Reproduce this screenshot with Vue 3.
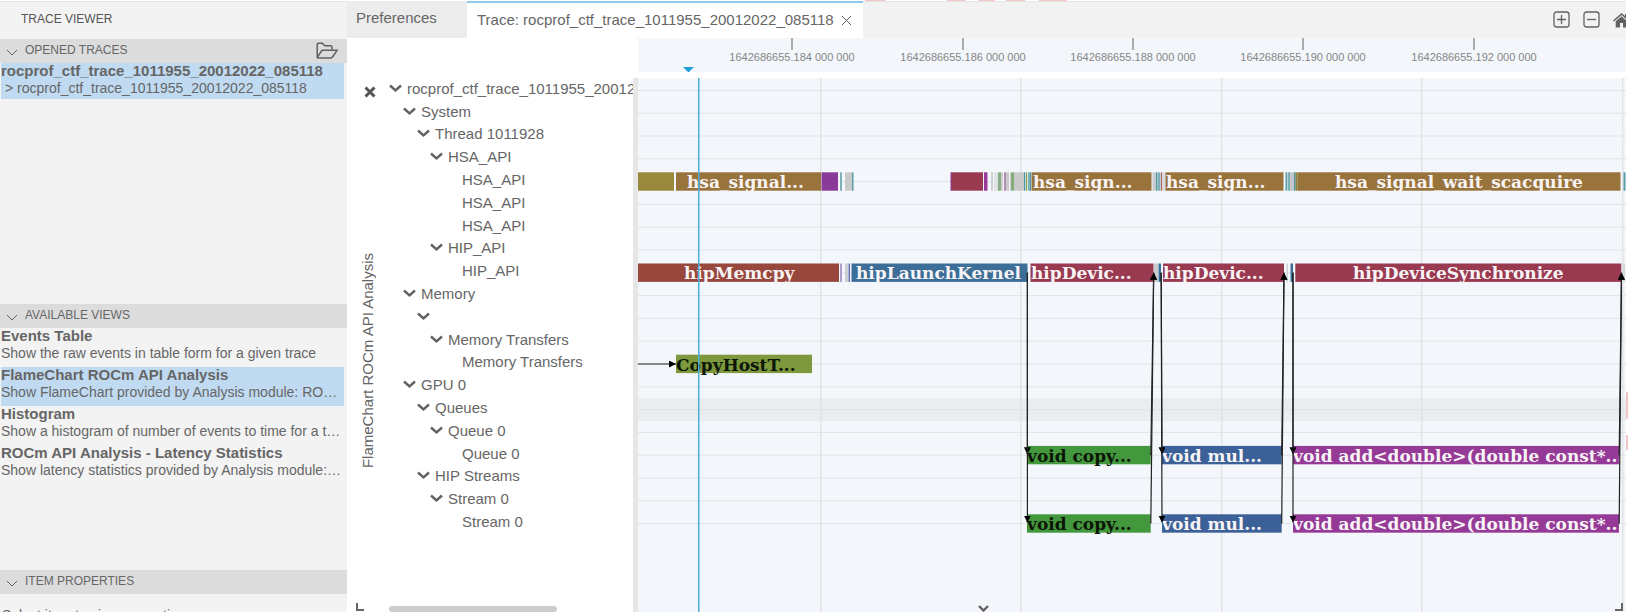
<script setup>
import { ref } from 'vue'

const traceName = 'rocprof_ctf_trace_1011955_20012022_085118'
const selectedView = ref(1)
const views = [
  { title: 'Events Table', desc: 'Show the raw events in table form for a given trace' },
  { title: 'FlameChart ROCm API Analysis', desc: 'Show FlameChart provided by Analysis module: ROCm API Analysis' },
  { title: 'Histogram', desc: 'Show a histogram of number of events to time for a trace' },
  { title: 'ROCm API Analysis - Latency Statistics', desc: 'Show latency statistics provided by Analysis module: ROCm API' }
]

const tree = [
  [0, traceName], [1, 'System'], [2, 'Thread 1011928'], [3, 'HSA_API'],
  [4, 'HSA_API'], [4, 'HSA_API'], [4, 'HSA_API'], [3, 'HIP_API'], [4, 'HIP_API'],
  [1, 'Memory'], [2, ''], [3, 'Memory Transfers'], [4, 'Memory Transfers'],
  [1, 'GPU 0'], [2, 'Queues'], [3, 'Queue 0'], [4, 'Queue 0'],
  [2, 'HIP Streams'], [3, 'Stream 0'], [4, 'Stream 0']
].map(([level, label]) => ({ level, label, open: level < 4 }))

const ticks = [154, 325, 495, 665, 836].map((x, i) => ({ x, label: `1642686655.${184 + i * 2} 000 000` }))

const rowPitch = 22.8
const rowY = (i) => 12.4 + i * rowPitch
const gridX = [182, 382, 583, 783, 984]

// [row, x, width, colour]
const bars = [
  [4, 0, 36, '#98893d'], [4, 38, 145, '#98733c'], [4, 183.5, 16.5, '#8a3a98'],
  [4, 202, 2, '#7fb0b8'], [4, 207, 7, '#c9cbcb'], [4, 214, 1.5, '#5a9ea8'],
  [4, 312.5, 2, '#8a3a98'], [4, 313.5, 31.5, '#993a50'], [4, 346, 3.5, '#9a3a9c'],
  [4, 353, 2, '#cfd0d0'], [4, 356, 4, '#e0e3e5'], [4, 360, 3, '#86ad86'], [4, 363, 2, '#cfcfcf'],
  [4, 366, 2, '#b48ab8'], [4, 368, 3, '#c9c9c9'], [4, 372, 1, '#cfcfcf'], [4, 373, 3, '#86ad7c'],
  [4, 376, 10, '#c9c9c9'], [4, 386, 1.3, '#4b96a5'], [4, 388, 1.2, '#86a04e'],
  [4, 390, 1.5, '#7fb0b8'], [4, 391.5, 1.5, '#4b96a5'], [4, 393.5, 120, '#98733c'],
  [4, 514.5, 3.5, '#c9cccc'], [4, 518, 1.5, '#4b96a5'], [4, 520, 2.5, '#7fb0b8'],
  [4, 523, 1.2, '#b06058'], [4, 525, 2.5, '#d9dadb'], [4, 527.5, 118, '#98733c'],
  [4, 647.5, 1.5, '#5a9ea8'], [4, 649.5, 2.5, '#7fb0b8'], [4, 652, 4, '#c4c8ca'],
  [4, 656, 1.5, '#4b96a5'], [4, 657.5, 2, '#8a7f3c'], [4, 659.5, 323, '#98733c'], [4, 985.5, 2, '#5a9ea8'],
  [8, 0, 201, '#98473d'], [8, 202, 2, '#ada0cf'], [8, 207, 3, '#cdcfd2'], [8, 210.5, 1.5, '#6a6fae'],
  [8, 213.5, 176, '#3c6e98'], [8, 392.5, 123, '#993a50'], [8, 516, 4, '#cbcccd'], [8, 520.5, 2.5, '#3c6e98'],
  [8, 525, 121, '#993a50'], [8, 648.5, 1.5, '#cfd1d4'], [8, 652.5, 2.5, '#3c6e98'],
  [8, 657.3, 326, '#993a50'], [8, 985, 2, '#d5d8db'],
  [12, 38, 136, '#7d983d'],
  [16, 389, 123.7, '#43983d'], [16, 524, 119.7, '#3c6098'], [16, 655, 326, '#963a98'],
  [19, 389, 123.7, '#43983d'], [19, 524, 119.7, '#3c6098'], [19, 655, 326, '#963a98']
]

// [row, x, text, dark]
const labels = [
  [4, 49, 'hsa_signal...'], [4, 395, 'hsa_sign...'], [4, 528, 'hsa_sign...'], [4, 697, 'hsa_signal_wait_scacquire'],
  [8, 46, 'hipMemcpy'], [8, 218, 'hipLaunchKernel'], [8, 393, 'hipDevic...'], [8, 525, 'hipDevic...'],
  [8, 715, 'hipDeviceSynchronize'],
  [12, 38, 'CopyHostT...', true],
  [16, 389, 'void copy...', true], [16, 524, 'void mul...'], [16, 655, 'void add<double>(double const*...'],
  [19, 389, 'void copy...', true], [19, 524, 'void mul...'], [19, 655, 'void add<double>(double const*...']
]

const arrows = []
for (const [top, bottom] of [[389.4, 389.4], [523.2, 524], [655, 655]]) {
  arrows.push([top, rowY(8), bottom, rowY(16) - 1], [top, rowY(8), bottom, rowY(19) - 1])
}
for (const [top, bottom] of [[515.7, 512.8], [646, 643.7], [983.5, 981.2]]) {
  arrows.push([bottom, rowY(16), top, rowY(8)], [bottom, rowY(19), top, rowY(8)])
}
arrows.push([0, rowY(12), 38, rowY(12)])
</script>

<template>
  <div class="page">
    <aside class="sidebar">
      <h1 class="side-title">TRACE VIEWER</h1>
      <section class="panel">
        <header class="panel-head">
          <svg class="thin-chev" width="12" height="7" viewBox="0 0 12 7"><path d="M1 1l5 5 5-5" /></svg>
          <h2>OPENED TRACES</h2>
          <button class="icon-btn folder" aria-label="Open trace">
            <svg width="22" height="18" viewBox="0 0 22 18">
              <path d="M1.2 15.500V2.600Q1.200 1.200 2.600 1.200H6.200L9 3.800H14.500Q16 3.800 16 5.200V8.200M1.200 15.500L6 8.300H21L16.500 15Q15.800 16 14.500 16H2Q1.200 16 1.200 15.500Z" />
            </svg>
          </button>
        </header>
        <ul class="items">
          <li>
            <button class="item trace selected">
              <strong>{{ traceName }}</strong>
              <span class="child">&gt; {{ traceName }}</span>
            </button>
          </li>
        </ul>
      </section>
      <section class="panel">
        <header class="panel-head">
          <svg class="thin-chev" width="12" height="7" viewBox="0 0 12 7"><path d="M1 1l5 5 5-5" /></svg>
          <h2>AVAILABLE VIEWS</h2>
        </header>
        <ul class="items">
          <li v-for="(v, i) in views" :key="v.title">
            <button class="item" :class="{ selected: i === selectedView }" @click="selectedView = i">
              <strong>{{ v.title }}</strong>
              <span>{{ v.desc }}</span>
            </button>
          </li>
        </ul>
      </section>
      <section class="panel">
        <header class="panel-head">
          <svg class="thin-chev" width="12" height="7" viewBox="0 0 12 7"><path d="M1 1l5 5 5-5" /></svg>
          <h2>ITEM PROPERTIES</h2>
        </header>
        <p class="hint">Select item to view properties</p>
      </section>
    </aside>

    <main class="main">
      <nav class="tabs">
        <button class="tab">Preferences</button>
        <div class="tab active">
          <button class="tab-label">Trace: {{ traceName }}</button>
          <button class="icon-btn" aria-label="Close tab">
            <svg width="11" height="11" viewBox="0 0 11 11"><path d="M1 1l9 9M10 1l-9 9" /></svg>
          </button>
        </div>
        <div class="tools">
          <button class="icon-btn" aria-label="Zoom in">
            <svg width="17" height="17" viewBox="0 0 17 17"><rect x="1" y="1" width="15" height="15" rx="2.500" /><path d="M8.500 4v9M4 8.500h9" /></svg>
          </button>
          <button class="icon-btn" aria-label="Zoom out">
            <svg width="17" height="17" viewBox="0 0 17 17"><rect x="1" y="1" width="15" height="15" rx="2.500" /><path d="M4 8.500h9" /></svg>
          </button>
          <button class="icon-btn home" aria-label="Reset zoom">
            <svg width="17" height="15" viewBox="0 0 17 15">
              <path d="M8.500 0L0 7.500l1 1L8.500 2l7.500 6.500 1-1L14 4.800V1h-2v2z" />
              <path d="M8.500 3.300L2.700 8.300V14.500H7V10h3v4.500h4.300V8.300z" />
            </svg>
          </button>
        </div>
      </nav>

      <div class="view">
        <div class="handle">
          <button class="icon-btn close" aria-label="Close view">
            <svg width="12" height="12" viewBox="0 0 12 12"><path d="M1.500 1.500l9 9M10.500 1.500l-9 9" /></svg>
          </button>
          <span class="view-name">FlameChart ROCm API Analysis</span>
          <i class="corner left"></i>
        </div>
        <div class="tree">
          <ul class="rows">
            <li v-for="(n, i) in tree" :key="i" :class="'level' + n.level">
              <button v-if="n.open" class="icon-btn toggle" :aria-label="'Collapse ' + n.label">
                <svg width="13" height="9" viewBox="0 0 13 9"><path d="M1 1.500l5.500 5 5.500-5" /></svg>
              </button>
              <span>{{ n.label }}</span>
            </li>
          </ul>
          <i class="scrollbar"></i>
        </div>
        <div class="timeline">
          <svg class="axis" width="100%" height="34">
            <g v-for="t in ticks" :key="t.x">
              <rect :x="t.x - 1" y="0" width="2" height="12" fill="#ababab" />
              <text :x="t.x" y="23" text-anchor="middle">{{ t.label }}</text>
            </g>
            <path d="M45 29h11l-5.500 5.500z" fill="#1f9ede" />
          </svg>
          <div class="plot">
            <svg class="chart" width="100%" height="100%">
              <defs>
                <marker id="arrow-head" markerUnits="userSpaceOnUse" markerWidth="8" markerHeight="8" refX="7" refY="3.500" orient="auto">
                  <path d="M0 0L7 3.500L0 7z" fill="#000" />
                </marker>
              </defs>
              <rect x="0" :y="rowY(14) - 11.4" width="100%" height="22.800" fill="#e9edef" />
              <rect v-for="i in 20" :key="'r' + i" x="0" :y="rowY(i - 1) - 0.5" width="100%" height="1" fill="#e0e3e6" />
              <rect v-for="x in gridX" :key="'c' + x" :x="x" y="0" width="1.500" height="100%" fill="#e1e3e7" />
              <rect v-for="(b, i) in bars" :key="'b' + i" :x="b[1]" :y="rowY(b[0]) - 9.3" :width="b[2]" height="18.400" :fill="b[3]" />
              <text v-for="(l, i) in labels" :key="'l' + i" :x="l[1]" :y="rowY(l[0]) + 6.600" :fill="l[3] ? '#0c1608' : '#f8f4f6'">{{ l[2] }}</text>
              <line v-for="(a, i) in arrows" :key="'a' + i" :x1="a[0]" :y1="a[1]" :x2="a[2]" :y2="a[3]" stroke="#222" stroke-width="1.200" marker-end="url(#arrow-head)" />
              <rect x="60" y="0" width="1.500" height="100%" fill="#4eaedb" />
            </svg>
            <svg class="more" width="11" height="7" viewBox="0 0 11 7"><path d="M1 1l4.500 4.500L10 1" /></svg>
            <i class="corner right"></i>
          </div>
        </div>
      </div>
    </main>

    <i class="mark m1"></i><i class="mark m2"></i><i class="mark m3"></i><i class="mark m4"></i>
    <i class="mark m5"></i><i class="mark m6"></i><i class="mark m7"></i>
  </div>
</template>

<style>
body {
  margin: 0;
  background: #fff;
}
</style>

<style scoped>
.page {
  position: relative;
  box-sizing: border-box;
  display: flex;
  height: 100vh;
  padding: 1px 2px 2px 0;
  overflow: hidden;
  font-family: "Liberation Sans", Arial, sans-serif;
  font-size: 15px;
  color: #666;
}
button {
  margin: 0;
  padding: 0;
  border: 0;
  background: none;
  font: inherit;
  color: inherit;
  text-align: left;
}
ul {
  margin: 0;
  padding: 0;
  list-style: none;
}
svg {
  display: block;
}
.icon-btn svg,
.thin-chev,
.more {
  fill: none;
  stroke: #616161;
}

.sidebar {
  display: grid;
  grid-template-rows: 38px 265fr 266fr 42fr;
  flex: 0 0 347px;
  min-width: 0;
  background: #f3f3f3;
  overflow: hidden;
}
.side-title {
  box-sizing: border-box;
  margin: 0;
  padding-left: 21px;
  border-top: 1px solid #e5e5e5;
  font-size: 12px;
  font-weight: 400;
  line-height: 35px;
  color: #555;
}
.panel {
  min-height: 0;
  overflow: hidden;
}
.panel-head {
  display: flex;
  align-items: center;
  height: 24px;
  padding: 0 9px 0 6px;
  background: #dcdcdc;
}
.thin-chev {
  margin-top: 2px;
}
.panel-head h2 {
  flex: 1;
  margin: 0 0 3px 7px;
  font-size: 12px;
  font-weight: 400;
}
.folder svg {
  stroke-width: 1.5;
}
.items {
  padding: 0 3px 0 1px;
}
.item {
  display: block;
  width: 100%;
  height: 39px;
  overflow: hidden;
}
.item.trace {
  height: 36px;
}
.item.selected {
  background: #c0daf1;
}
.item strong,
.item span {
  display: block;
  overflow: hidden;
  white-space: nowrap;
  text-overflow: ellipsis;
}
.item strong {
  height: 17px;
  line-height: 15px;
}
.item span {
  margin-bottom: 6px;
  font-size: 14px;
  line-height: 16px;
}
.item .child {
  margin-bottom: 3px;
  padding-left: 4px;
}
.hint {
  margin: 13px 0 0 2px;
  font-size: 14px;
  line-height: 16px;
}

.main {
  display: flex;
  flex: 1;
  flex-direction: column;
  min-width: 0;
}
.tabs {
  box-sizing: border-box;
  display: flex;
  height: 37px;
  background: linear-gradient(#e5e5e5 1px, #f2f2f2 1px);
}
.tab {
  box-sizing: border-box;
  width: 120px;
  padding: 0 0 4px 9px;
  background: #ececec;
}
.tab.active {
  display: flex;
  align-items: center;
  justify-content: space-between;
  width: 396px;
  padding: 0 11px 3px 10px;
  border-top: 2px solid #8cc8ea;
  background: #fff;
}
.tab-label {
  white-space: nowrap;
}
.tab .icon-btn {
  padding-top: 3px;
}
.tools {
  display: flex;
  flex: 1;
  align-items: center;
  justify-content: flex-end;
  gap: 13px;
  overflow: hidden;
}
.tools svg {
  stroke-width: 1.3;
}
.home {
  margin: 2px -4px 0 0;
}
.home svg {
  fill: #616161;
  stroke: none;
}

.view {
  display: flex;
  flex: 1;
  min-height: 0;
}
.handle {
  box-sizing: border-box;
  display: flex;
  flex-direction: column;
  align-items: center;
  width: 42px;
  padding: 48px 0 1px;
}
.close {
  padding-left: 4px;
}
.close svg {
  stroke-width: 3;
  stroke: #555;
}
.view-name {
  margin: 155px 0 auto;
  line-height: 16px;
  white-space: nowrap;
  writing-mode: vertical-rl;
  transform: rotate(180deg);
}
.corner {
  box-sizing: border-box;
  width: 8px;
  height: 8px;
  border-bottom: 2px solid #666;
}
.corner.left {
  align-self: flex-start;
  margin-left: 9px;
  border-left: 2px solid #666;
}
.tree {
  display: flex;
  flex-direction: column;
  justify-content: space-between;
  width: 244px;
  padding-top: 39px;
  overflow: hidden;
}
.rows {
  display: grid;
  grid-auto-rows: 1fr;
  height: 456px;
}
.rows li {
  display: flex;
  align-items: center;
  gap: 5px;
  white-space: nowrap;
}
.toggle {
  width: 13px;
}
.toggle svg {
  stroke-width: 2.4;
}
.level1 {
  padding-left: 14px;
}
.level2 {
  padding-left: 28px;
}
.level3 {
  padding-left: 41px;
}
.level4 {
  padding-left: 73px;
}
.scrollbar {
  width: 168px;
  height: 6px;
  border-radius: 3px;
  background: #cdcdcd;
}
.timeline {
  display: flex;
  flex: 1;
  flex-direction: column;
  gap: 6px;
  min-width: 0;
}
.axis {
  flex: none;
  box-sizing: border-box;
  padding-left: 5px;
  background: linear-gradient(90deg, #fff 5px, #f3f7fc 5px);
  font-size: 11px;
  fill: #858585;
}
.plot {
  position: relative;
  box-sizing: border-box;
  flex: 1;
  min-height: 0;
  border-left: 5px solid #e6e6e6;
  background: #f3f7fc;
}
.chart {
  font-family: "DejaVu Serif", serif;
  font-size: 17px;
  font-weight: 700;
}
.more {
  position: absolute;
  bottom: 0;
  left: 340px;
  stroke-width: 2.4;
}
.corner.right {
  position: absolute;
  right: 3px;
  bottom: 1px;
  border-right: 2px solid #666;
}

.mark {
  position: absolute;
  top: 0;
  height: 1px;
  background: #f5c6c6;
}
.m1 { left: 865px; width: 21px; }
.m2 { left: 947px; width: 19px; }
.m3 { left: 978px; width: 17px; }
.m4 { left: 1006px; width: 19px; }
.m5 { left: 1039px; width: 28px; }
.m6 { top: 392px; right: 0; width: 2px; height: 27px; }
.m7 { top: 435px; right: 0; width: 2px; height: 15px; }
</style>
